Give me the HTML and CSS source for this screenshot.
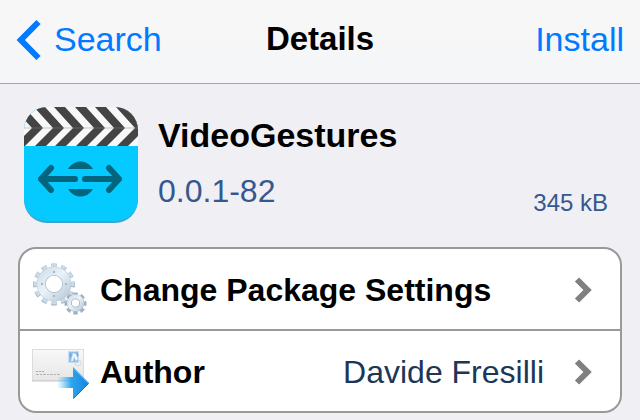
FILE: index.html
```
<!DOCTYPE html>
<html lang="en">
<head>
    <meta charset="UTF-8">
    <meta name="viewport" content="width=device-width, initial-scale=1.0">
    <title>Details</title>
    <link rel="stylesheet" href="styles.css">
</head>
<body>
    <header class="navbar">
        <a class="back" href="#search">
            <svg class="back-icon" viewBox="0 0 26 42" aria-hidden="true">
                <path d="M22.500 3L4.800 21l17.700 18" fill="none" stroke="#007aff" stroke-width="6"/>
            </svg>
            Search
        </a>
        <h1 class="title">Details</h1>
        <button class="install" type="button">Install</button>
    </header>

    <main>
        <section class="package">
            <svg class="package-icon" viewBox="0 0 114 116" aria-hidden="true">
                <defs>
                    <clipPath id="icon-shape"><rect width="114" height="116" rx="23"/></clipPath>
                    <path id="stripe" d="M10 0h11l19 21-19 19H10l19-19z"/>
                </defs>
                <g clip-path="url(#icon-shape)">
                    <rect width="114" height="116" fill="#3fa3cf"/>
                    <rect width="114" height="114" rx="22" fill="#05caff"/>
                    <rect y="30" width="114" height="50" fill="#05caff"/>
                    <rect width="114" height="39" fill="#f8f8f8"/>
                    <!-- clapper stripes -->
                    <svg width="114" height="39" fill="#444">
                        <use href="#stripe" x="-41"/>
                        <use href="#stripe" x="-21"/>
                        <use href="#stripe"/>
                        <use href="#stripe" x="20"/>
                        <use href="#stripe" x="41"/>
                        <use href="#stripe" x="61"/>
                        <use href="#stripe" x="82"/>
                    </svg>
                    <path d="M0 21h114" stroke="#888" stroke-opacity=".45"/>
                    <g fill="#04657f">
                        <path d="M44 62c6-10 19-10 25 0zM44 82c6 10 19 10 25 0z"/>
                    </g>
                    <path d="M51 72H17M27 61L17 72l10 11M61 72h34M85 61l10 11-10 11" fill="none" stroke="#04657f" stroke-width="6" stroke-linecap="round" stroke-linejoin="round"/>
                </g>
            </svg>
            <div class="package-text">
                <h2 class="name">VideoGestures</h2>
                <p class="version">0.0.1-82</p>
            </div>
            <p class="size">345 kB</p>
        </section>

        <nav class="list">
            <a class="row" href="#settings">
                <svg class="row-icon" viewBox="0 0 60 60" aria-hidden="true">
                    <defs>
                        <linearGradient id="metal" x1="0" y1="0" x2="1" y2="1">
                            <stop offset="0" stop-color="#d3e0ec"/>
                            <stop offset=".45" stop-color="#eaf2f8"/>
                            <stop offset="1" stop-color="#bccddd"/>
                        </linearGradient>
                    </defs>
                    <g fill="none">
                        <circle cx="24" cy="24.500" r="18.500" pathLength="24" stroke="#a0b2c5" stroke-width="5" stroke-dasharray="1.100 .900" stroke-dashoffset=".550"/>
                        <circle cx="24" cy="24" r="18" pathLength="24" stroke="#cbdae7" stroke-width="5" stroke-dasharray="1 1" stroke-dashoffset=".500"/>
                        <circle cx="24" cy="24" r="12.800" stroke="#a9bacb" stroke-width="9"/>
                        <circle cx="24" cy="24" r="13" stroke="url(#metal)" stroke-width="8"/>
                        <circle cx="45.500" cy="43.500" r="9" pathLength="16" stroke="#9fb0c1" stroke-width="4" stroke-dasharray="1.200 .800" stroke-dashoffset=".600"/>
                        <circle cx="45.500" cy="43" r="6.200" stroke="#9fb1c3" stroke-width="5"/>
                        <circle cx="45.500" cy="43" r="6.500" stroke="url(#metal)" stroke-width="4"/>
                    </g>
                    <g fill="#a6bacd">
                        <circle cx="24" cy="12" r="1.200"/>
                        <circle cx="36" cy="24" r="1.200"/>
                        <circle cx="24" cy="36" r="1.200"/>
                        <circle cx="12" cy="24" r="1.200"/>
                    </g>
                </svg>
                <span class="label">Change Package Settings</span>
                <svg class="chevron" viewBox="0 0 18 26" aria-hidden="true">
                    <path d="M3 2.500L13.500 13 3 23.500" fill="none" stroke="#808080" stroke-width="6"/>
                </svg>
            </a>
            <a class="row" href="#author">
                <svg class="row-icon" viewBox="0 0 60 60" aria-hidden="true">
                    <defs>
                        <linearGradient id="paper" x1="0" y1="0" x2="0" y2="1">
                            <stop offset="0" stop-color="#f8f8f8"/>
                            <stop offset="1" stop-color="#e6e6e6"/>
                        </linearGradient>
                        <linearGradient id="arrow" x1="0" y1="0" x2="1" y2="0">
                            <stop offset="0" stop-color="#3db8f5" stop-opacity="0"/>
                            <stop offset=".45" stop-color="#2ea5ee"/>
                            <stop offset="1" stop-color="#1583dc"/>
                        </linearGradient>
                    </defs>
                    <rect x="2.500" y="7.500" width="51" height="31" fill="url(#paper)" stroke="#dcdcdc"/>
                    <path d="M2 39h52" stroke="#cacaca"/>
                    <rect x="38.500" y="9.500" width="10" height="11" fill="#93bee9" stroke="#c6dcf2"/>
                    <path d="M41 19l2-8 3 1 2 5-2 2-2-4-1 4z" fill="#eaf5ff"/>
                    <path d="M41 11l-1 4M47 11l1 3" stroke="#5c9ad8"/>
                    <circle cx="48" cy="21" r="3" fill="none" stroke="#c4c9d2" stroke-opacity=".6"/>
                    <path d="M6 29.500h8" stroke="#aaa" stroke-dasharray="2 1"/>
                    <path d="M6 32.500h25" stroke="#b4b4b4" stroke-dasharray="3 1 2 1"/>
                    <path d="M27 35h16V25l16 16-16 16V46H27z" fill="url(#arrow)"/>
                    <path d="M43.500 26.500L58 41" stroke="#52b9f3" fill="none"/>
                    <path d="M58.500 41.500L43.500 56.500" stroke="#1272c4" fill="none"/>
                </svg>
                <span class="label">Author</span>
                <span class="value">Davide Fresilli</span>
                <svg class="chevron" viewBox="0 0 18 26" aria-hidden="true">
                    <path d="M3 2.500L13.500 13 3 23.500" fill="none" stroke="#808080" stroke-width="6"/>
                </svg>
            </a>
        </nav>
    </main>
</body>
</html>
```

FILE: styles.css
```
* {
    box-sizing: border-box;
}

body {
    margin: 0;
    background: #efeff4;
    color: #000;
    font-family: "Liberation Sans", Arial, Helvetica, sans-serif;
    font-size: 32px;
}

h1, h2, p {
    margin: 0;
}

a {
    text-decoration: none;
}

/* Top bar */
.navbar {
    display: grid;
    grid-template-columns: 1fr auto 1fr;
    align-items: center;
    padding: 19px 16px 22px;
    background: linear-gradient(#f7f7f7, #f5f6f8);
    border-bottom: 1px solid #a7a7aa;
    font-size: 34px;
    line-height: 40px;
}

.back {
    display: flex;
    align-items: flex-start;
    gap: 12px;
    color: #007aff;
}

.back-icon {
    width: 26px;
    height: 42px;
}

.title,
.install {
    align-self: start;
}

.title {
    font-size: 33px;
}

.install {
    justify-self: end;
    padding: 0;
    border: none;
    background: none;
    color: #007aff;
    font: inherit;
    cursor: pointer;
}

/* Package summary */
.package {
    display: flex;
    align-items: flex-end;
    gap: 20px;
    padding: 23px 32px 24px 24px;
}

.package-icon {
    flex: none;
    width: 114px;
    height: 116px;
}

.package-text {
    flex: 1;
    padding-bottom: 4px;
}

.name {
    font-size: 34px;
    line-height: 56px;
}

.version {
    line-height: 56px;
    color: #35588f;
}

.size {
    font-size: 24px;
    line-height: 40px;
    color: #35588f;
}

/* Grouped list */
.list {
    margin: 0 18px 7px;
    background: #fff;
    border: 2px solid #999;
    border-radius: 18px;
}

.row {
    display: flex;
    align-items: center;
    padding: 11px 28px 9px 10px;
    color: #000;
    line-height: 40px;
}

.row + .row {
    border-top: 2px solid #999;
}

.row-icon {
    flex: none;
    width: 60px;
    height: 60px;
    margin-right: 10px;
}

.label {
    flex: 1;
    font-weight: bold;
}

.value {
    color: #1b3657;
}

.chevron {
    flex: none;
    width: 18px;
    height: 26px;
    margin-left: 30px;
}
```
